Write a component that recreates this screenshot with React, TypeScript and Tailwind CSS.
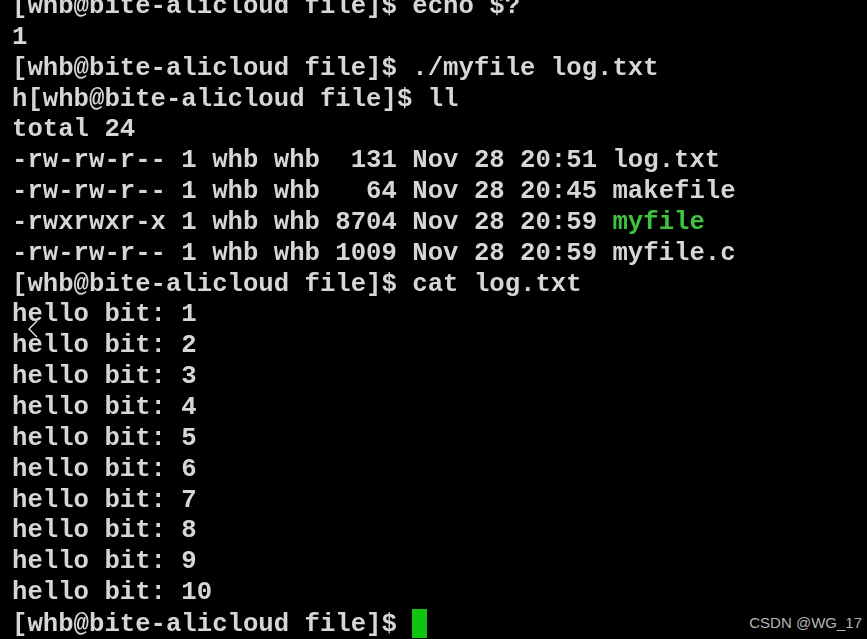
import React from 'react';

const lines: React.ReactNode[] = [
  '[whb@bite-alicloud file]$ echo $?',
  '1',
  '[whb@bite-alicloud file]$ ./myfile log.txt',
  'h[whb@bite-alicloud file]$ ll',
  'total 24',
  '-rw-rw-r-- 1 whb whb  131 Nov 28 20:51 log.txt',
  '-rw-rw-r-- 1 whb whb   64 Nov 28 20:45 makefile',
  <>
    -rwxrwxr-x 1 whb whb 8704 Nov 28 20:59 <span className="text-[#3fc23f]">myfile</span>
  </>,
  '-rw-rw-r-- 1 whb whb 1009 Nov 28 20:59 myfile.c',
  '[whb@bite-alicloud file]$ cat log.txt',
  ...Array.from({ length: 10 }, (_, i) => `hello bit: ${i + 1}`),
  <>
    [whb@bite-alicloud file]$ <span className="inline-block w-[15px] h-[29px] align-[-7px] bg-[#12c412]" />
  </>,
];

export default function App() {
  return (
    <div className="relative w-[867px] h-[639px] overflow-hidden bg-black">
      <div className="mt-[-8px] pl-[12px] font-['Liberation_Mono',monospace] font-bold text-[25.67px] leading-[30.85px] text-[#d6d6d6] whitespace-pre blur-[0.4px]">
        {lines.map((line, i) => (
          <div key={i}>{line}</div>
        ))}
      </div>

      {/* slide-back chevron overlay */}
      <svg className="absolute left-[27px] top-[319px]" width="12" height="20" viewBox="0 0 12 20" fill="none">
        <path d="M10 2 L2 10 L10 18" stroke="#f2f2f2" strokeWidth="1.3" />
      </svg>

      <div className="absolute right-[5px] bottom-[6px] font-['Liberation_Sans',Arial,sans-serif] text-[15px] leading-[20px] text-[#b4b4b4]">
        CSDN @WG_17
      </div>
    </div>
  );
}
